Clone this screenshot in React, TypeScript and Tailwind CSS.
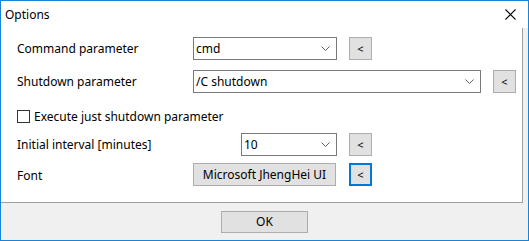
import React from 'react';

const font = { fontFamily: '"Noto Sans", "Open Sans", Arial, sans-serif' };

const Chevron: React.FC = () => (
    <svg width="9" height="5" viewBox="0 0 9 5" className="shrink-0">
        <path d="M0.5 0.5 L4.5 4.5 L8.5 0.5" fill="none" stroke="#606060" strokeWidth="1" />
    </svg>
);

const Combo: React.FC<{ value: string; width: string }> = ({ value, width }) => (
    <div className={`${width} h-[23px] border border-[#7a7a7a] bg-white flex items-center pl-[2px] pr-[6px]`}>
        <span className="flex-1 text-[12px] leading-none text-black pt-[1px]">{value}</span>
        <Chevron />
    </div>
);

const SmallButton: React.FC<{ focused?: boolean }> = ({ focused }) => (
    <div
        className={`w-[23px] h-[23px] bg-[#e1e1e1] flex items-center justify-center text-[11px] leading-none text-black ${
            focused ? 'border-2 border-[#0078d7]' : 'border border-[#adadad]'
        }`}
    >
        &lt;
    </div>
);

export default function App() {
    return (
        <div className="w-[529px] h-[241px] border border-[#1883d7] bg-[#f0f0f0] flex flex-col text-black" style={font}>
            {/* Title bar */}
            <div className="h-[27px] bg-white flex items-center justify-between pl-[4px] pr-[12px] shrink-0">
                <span className="text-[12px] leading-none pt-[1px]">Options</span>
                <svg width="11" height="11" viewBox="0 0 11 11">
                    <path d="M0.5 0.5 L10.5 10.5 M10.5 0.5 L0.5 10.5" stroke="#000" strokeWidth="1.1" />
                </svg>
            </div>

            {/* Options panel */}
            <div className="w-[522px] h-[175px] bg-white border-r border-b border-[#a0a0a0] pl-[16px] pt-[9px] flex flex-col shrink-0 text-[12px]">
                <div className="flex items-center h-[23px]">
                    <span className="w-[176px] pt-[1px]">Command parameter</span>
                    <Combo value="cmd" width="w-[144px]" />
                    <div className="ml-[12px]"><SmallButton /></div>
                </div>
                <div className="flex items-center h-[23px] mt-[10px]">
                    <span className="w-[176px] pt-[1px]">Shutdown parameter</span>
                    <Combo value="/C shutdown" width="w-[288px]" />
                    <div className="ml-[12px]"><SmallButton /></div>
                </div>
                <div className="flex items-center h-[23px] mt-[12px]">
                    <div className="w-[13px] h-[13px] border border-[#333] bg-white" />
                    <span className="ml-[4px]">Execute just shutdown parameter</span>
                </div>
                <div className="flex items-center h-[23px] mt-[5px]">
                    <span className="w-[224px] pt-[1px]">Initial interval [minutes]</span>
                    <Combo value="10" width="w-[96px]" />
                    <div className="ml-[12px]"><SmallButton /></div>
                </div>
                <div className="flex items-center h-[23px] mt-[7px]">
                    <span className="w-[176px] pt-[2px]">Font</span>
                    <div className="w-[143px] h-[23px] bg-[#e1e1e1] border border-[#adadad] flex items-center justify-center leading-none">
                        Microsoft JhengHei UI
                    </div>
                    <div className="ml-[13px]"><SmallButton focused /></div>
                </div>
            </div>

            {/* Footer */}
            <div className="flex-1 flex items-center justify-center">
                <div className="w-[87px] h-[22px] bg-[#e1e1e1] border border-[#adadad] flex items-center justify-center text-[12px] leading-none">
                    OK
                </div>
            </div>
        </div>
    );
}
